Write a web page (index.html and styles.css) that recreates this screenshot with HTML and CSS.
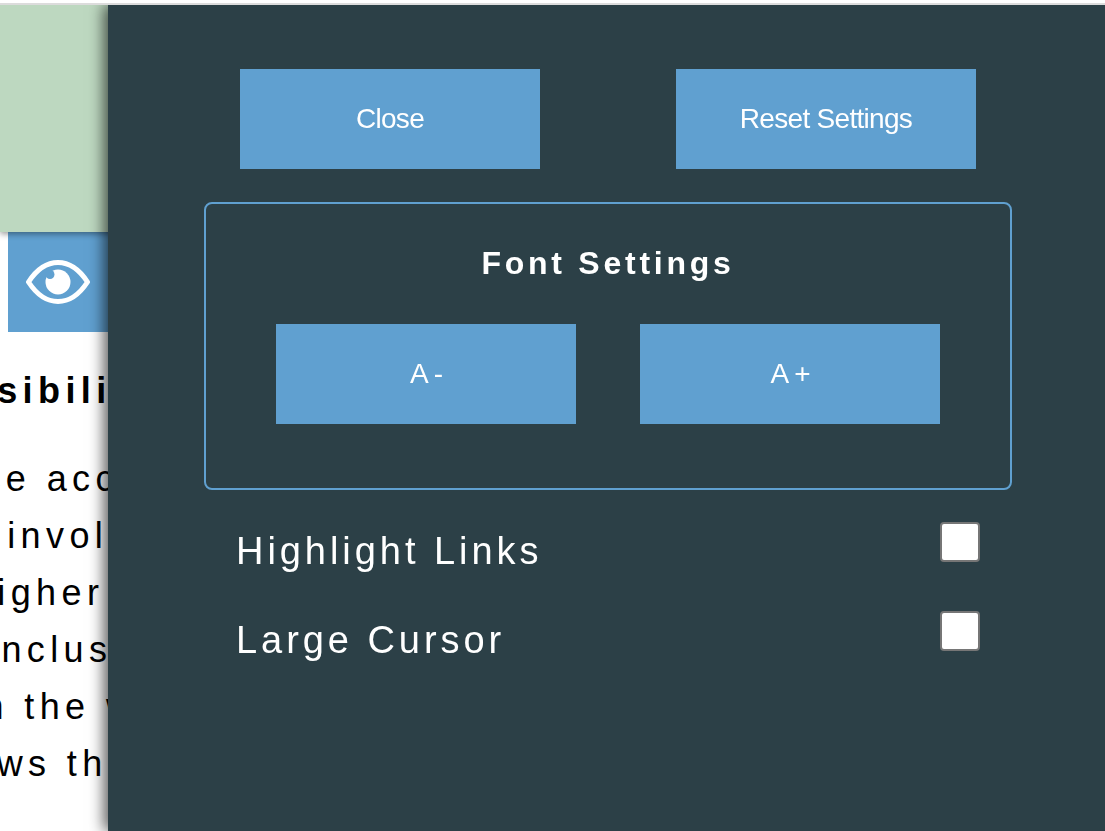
FILE: index.html
```html
<!DOCTYPE html>
<html lang="en">
<head>
  <meta charset="UTF-8" />
  <title>Accessibility Settings</title>
  <link rel="stylesheet" href="styles.css">
</head>
<body>
  <div class="top-line"></div>
  <div class="hero"></div>

  <button class="eye-btn" aria-label="Accessibility">
    <svg width="64" height="44" viewBox="0 0 64 44">
      <path d="M2.500 22C10 10.500 20.500 2.500 32 2.500S54 10.500 61.500 22C54 33.500 43.500 41.500 32 41.500S10 33.500 2.500 22z" fill="none" stroke="#fff" stroke-width="5" stroke-linejoin="round" />
      <circle cx="32" cy="22" r="12.500" fill="#fff" />
      <circle cx="24" cy="14.500" r="4.500" fill="#60a0d0" />
    </svg>
  </button>

  <main class="content">
    <h2>Web Accessibility</h2>
    <p class="line-1">Practice accessibility</p>
    <p class="line-2">It involves design</p>
    <p class="line-3">A higher standard</p>
    <p class="line-4">Inclusive pages</p>
    <p class="line-5">on the web</p>
    <p class="line-6">allows them</p>
  </main>

  <aside class="panel">
    <div class="btn-row">
      <button class="btn">Close</button>
      <button class="btn">Reset Settings</button>
    </div>

    <section class="font-box">
      <h3>Font Settings</h3>
      <div class="font-btns">
        <button class="btn btn-font">A-</button>
        <button class="btn btn-font">A+</button>
      </div>
    </section>

    <label class="option"><span>Highlight Links</span><input type="checkbox" /></label>
    <label class="option"><span>Large Cursor</span><input type="checkbox" /></label>
  </aside>
</body>
</html>
```

FILE: styles.css
```css
html, body {
  height: 100%;
}

body {
  margin: 0;
  background: #fff;
  color: #000;
  font-family: 'Liberation Sans', Arial, sans-serif;
  overflow: hidden;
}

.top-line {
  height: 2px;
  margin-top: 3px;
  background: #dcdcdc;
}

.hero {
  position: relative;
  z-index: 1;
  height: 227px;
  background: #bdd8c0;
  box-shadow: 0 2px 6px rgba(0, 0, 0, 0.4);
  clip-path: inset(0 0 -10px 0);
}

.eye-btn {
  display: flex;
  align-items: center;
  justify-content: center;
  width: 100px;
  height: 100px;
  margin-left: 8px;
  padding: 0;
  border: none;
  background: #60a0d0;
}

.content {
  white-space: nowrap;
}

.content h2 {
  margin: 39px 0 0 -241.5px;
  font-size: 36px;
  line-height: 40px;
  letter-spacing: 5.4px;
}

.content p {
  margin: 0;
  font-size: 36px;
  line-height: 57px;
  letter-spacing: 5.4px;
}

.content .line-1 { margin: 39px 0 0 -142px; }
.content .line-2 { margin-left: -39px; }
.content .line-3 { margin-left: -71px; }
.content .line-4 { margin-left: -14px; }
.content .line-5 { margin-left: -42px; }
.content .line-6 { margin-left: -81px; }

/* settings drawer sits on top of the page */
.panel {
  position: fixed;
  z-index: 2;
  top: 5px;
  left: 108px;
  right: 0;
  bottom: 0;
  background: #2c4047;
  box-shadow: -4px 0 14px rgba(0, 0, 0, 0.65);
  clip-path: inset(0 0 0 -30px);
  color: #fff;
}

.btn-row {
  display: flex;
  gap: 136px;
  padding: 64px 0 0 132px;
}

.btn {
  width: 300px;
  height: 100px;
  padding: 0;
  border: none;
  background: #60a0d0;
  color: #fff;
  font-family: inherit;
  font-size: 28px;
  letter-spacing: -0.7px;
}

.font-box {
  box-sizing: border-box;
  width: 808px;
  height: 288px;
  margin: 33px 0 0 96px;
  border: 2px solid #60a0d0;
  border-radius: 8px;
}

.font-box h3 {
  margin: 39px 0 0;
  font-size: 32px;
  line-height: 40px;
  letter-spacing: 3.75px;
  text-align: center;
}

.font-btns {
  display: flex;
  gap: 64px;
  margin: 41px 0 0 70px;
}

.btn-font {
  padding-left: 6px;
  font-size: 28px;
  letter-spacing: 5px;
}

.option {
  display: flex;
  align-items: flex-start;
  justify-content: space-between;
  width: 744px;
  height: 89px;
  margin-left: 128px;
  font-size: 38px;
  line-height: 57px;
  letter-spacing: 3.95px;
}

.font-box + .option {
  margin-top: 33px;
}

.option input {
  appearance: none;
  box-sizing: border-box;
  width: 40px;
  height: 40px;
  margin: -1px 0 0;
  background: #fff;
  border: 2px solid #767676;
  border-radius: 4px;
}
```
